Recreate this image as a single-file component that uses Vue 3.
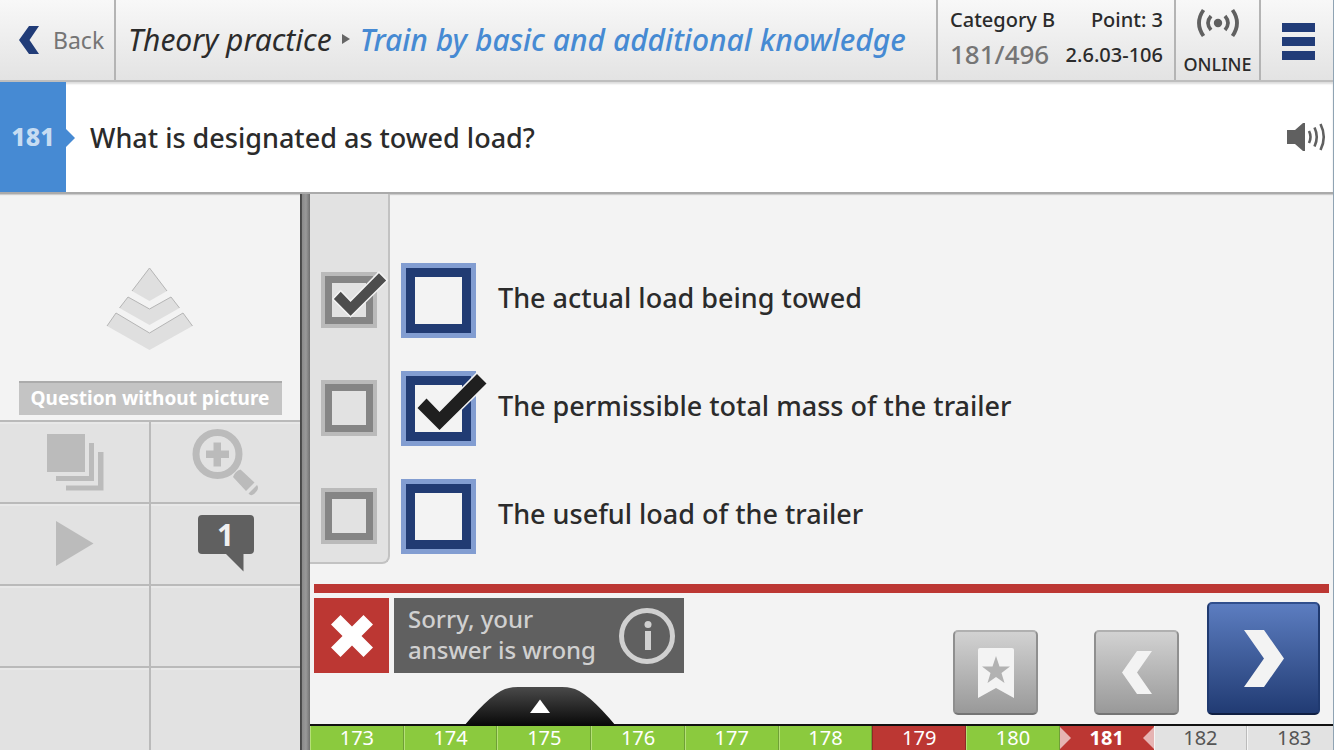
<template>
  <div class="trainer">
    <!-- Top bar -->
    <header class="topbar">
      <button class="back" type="button">
        <svg class="back-icon" viewBox="0 0 20 28" aria-hidden="true">
          <path d="M10 0H20L10.500 14L20 28H10L0 14Z" fill="#213c78" />
        </svg>
        Back
      </button>

      <nav class="crumbs">
        <a href="#">Theory practice</a>
        <svg class="crumb-arrow" viewBox="0 0 8 10" aria-hidden="true"><path d="M0 0L8 5L0 10Z" fill="#666" /></svg>
        <a href="#" class="current">Train by basic and additional knowledge</a>
      </nav>

      <div class="info">
        <div class="info-col">
          <span>Category B</span>
          <span class="counter">{{ current }}/{{ total }}</span>
        </div>
        <div class="info-col right">
          <span>Point: 3</span>
          <span>2.6.03-106</span>
        </div>
      </div>

      <div class="online">
        <svg class="online-icon" viewBox="0 0 42 28" fill="none" stroke="#606060" aria-hidden="true">
          <circle cx="21" cy="14" r="4.200" fill="#606060" stroke="none" />
          <path d="M14 7Q8 14 14 21M28 7Q34 14 28 21" stroke-width="3.600" />
          <path d="M6.500 1Q-2.500 14 6.500 27M35.500 1Q44.500 14 35.500 27" stroke-width="3.800" />
        </svg>
        <span>ONLINE</span>
      </div>

      <button class="menu" type="button" aria-label="Menu">
        <span></span><span></span><span></span>
      </button>
    </header>

    <!-- Question -->
    <section class="question">
      <div class="question-number">{{ current }}</div>
      <h1>What is designated as towed load?</h1>
      <button class="sound" type="button" aria-label="Read aloud">
        <svg viewBox="0 0 40 30" aria-hidden="true">
          <path d="M1 8H9L17 1H19V29H17L9 22H1Z" fill="#606060" />
          <path d="M23 9Q26 15 23 21M28.500 5.500Q33 15 28.500 24.500M34.500 2Q41 15 34.500 28" fill="none" stroke="#606060" stroke-width="2.600" />
        </svg>
      </button>
    </section>

    <main class="body">
      <aside class="side">
        <div class="picture">
          <svg class="pyramid" viewBox="0 0 88 84" aria-hidden="true">
            <g fill="#dfdfdf">
              <path d="M43.500 1L61 24L43.500 34L26 24Z" />
              <path d="M22 30L43.500 42L65 30L73.500 41L43.500 58L13.500 41Z" />
              <path d="M10 46L43.500 66L77 46L86.500 59L43.500 83L1 59Z" />
            </g>
            <g fill="none" stroke="#b5b5b5" stroke-width="1">
              <path d="M26 24L43.500 1L61 24" />
              <path d="M13.500 41L22 30L43.500 42L65 30L73.500 41" />
              <path d="M1 59L10 46L43.500 66L77 46L86.500 59" />
            </g>
          </svg>
          <div class="no-picture">Question without picture</div>
        </div>

        <div class="tools">
          <button type="button" aria-label="Pictures">
            <svg class="tool-icon" viewBox="0 0 66 66" fill="#bbb" aria-hidden="true">
              <path d="M5 5H43V43H5ZM47 14H52V52H14V47H47ZM56 23H61.500V61.500H24V56.500H56Z" />
            </svg>
          </button>
          <button type="button" aria-label="Zoom">
            <svg class="tool-icon" viewBox="0 0 66 66" fill="#bbb" aria-hidden="true">
              <circle cx="24.500" cy="25" r="21.500" fill="none" stroke="#bbb" stroke-width="7" />
              <path d="M20.500 13.500H28V21.500H36V29H28V37.500H20.500V29H13V21.500H20.500Z" />
              <path d="M47.500 40.500Q42 42 40 48L53 62L61.500 53.500ZM64 56L55.500 64.500Q58 67.500 61 65Q67 60 64 56Z" />
            </svg>
          </button>
          <button type="button" aria-label="Play">
            <svg class="tool-icon" viewBox="0 0 66 66" aria-hidden="true"><path d="M14 10L51.500 32.500L14 55Z" fill="#bbb" /></svg>
          </button>
          <button type="button" aria-label="Comments" class="comment">
            <svg class="tool-icon" viewBox="0 0 66 66" aria-hidden="true">
              <path d="M9 4H57Q61 4 61 8V39Q61 43 57 43H50.500V60.500L33 43H9Q5 43 5 39V8Q5 4 9 4Z" fill="#606060" />
            </svg>
            <span class="comment-count">1</span>
          </button>
          <div></div>
          <div></div>
          <div></div>
          <div></div>
        </div>
      </aside>

      <div class="divider"></div>

      <section class="content">
        <div class="answers">
          <div class="solutions">
            <span v-for="(a, i) in answers" :key="i" class="box small">
              <input type="checkbox" :checked="a.correct" disabled :aria-label="'Solution: ' + a.text">
              <svg v-if="a.correct" class="tick" viewBox="0 0 70 58" aria-hidden="true">
                <path d="M2.500 29L11.500 19.500L24.500 33L62 -5L71.500 4.500L24.500 51Z" fill="#4d4d4d" stroke="#f3f3f3" stroke-width="4" paint-order="stroke" />
              </svg>
            </span>
          </div>

          <div class="choices">
            <div v-for="(a, i) in answers" :key="i" class="choice">
              <span class="box">
                <input :id="'answer-' + i" v-model="a.picked" type="checkbox">
                <svg v-if="a.picked" class="tick" viewBox="0 0 70 58" aria-hidden="true">
                  <path d="M2.500 29L11.500 19.500L24.500 33L62 -5L71.500 4.500L24.500 51Z" fill="#1f1f1f" stroke="#f3f3f3" stroke-width="3" paint-order="stroke" />
                </svg>
              </span>
              <label :for="'answer-' + i">{{ a.text }}</label>
            </div>
          </div>
        </div>

        <div class="rule"></div>

        <div class="actions">
          <div class="wrong">
            <svg viewBox="0 0 42 42" aria-hidden="true">
              <path d="M9.500 0L21 11.500L32.500 0L42 9.500L30.500 21L42 32.500L32.500 42L21 30.500L9.500 42L0 32.500L11.500 21L0 9.500Z" fill="#fff" />
            </svg>
          </div>
          <button class="feedback" type="button">
            <span>Sorry, your<br>answer is wrong</span>
            <svg viewBox="0 0 58 58" aria-hidden="true">
              <circle cx="29" cy="29" r="25.500" fill="none" stroke="#d0d0d0" stroke-width="5" />
              <circle cx="30" cy="17.500" r="3.500" fill="#d0d0d0" />
              <path d="M27 24H33V43H27Z" fill="#d0d0d0" />
            </svg>
          </button>

          <div class="nav-buttons">
            <button class="key mark" type="button" aria-label="Bookmark">
              <svg viewBox="0 0 36 50" aria-hidden="true">
                <path d="M2 0H34Q36 0 36 2V50L18 40L0 50V2Q0 0 2 0Z" fill="#f3f3f3" />
                <path d="M18 8L21.500 18.500H32L23.500 25L26.500 35L18 29L9.500 35L12.500 25L4 18.500H14.500Z" fill="#b2b2b2" />
              </svg>
            </button>
            <button class="key prev" type="button" aria-label="Previous">
              <svg viewBox="0 0 30 43" aria-hidden="true"><path d="M15 0H30L15 21.500L30 43H15L0 21.500Z" fill="#f3f3f3" /></svg>
            </button>
            <button class="key next" type="button" aria-label="Next">
              <svg viewBox="0 0 40 57" aria-hidden="true"><path d="M0 0H20L40 28.500L20 57H0L20 28.500Z" fill="#f3f3f3" /></svg>
            </button>
          </div>
        </div>

        <footer class="strip">
          <button class="drawer" type="button" aria-label="Show all questions">
            <svg viewBox="0 0 152 39" aria-hidden="true">
              <defs>
                <linearGradient id="drawer-fill" x1="0" y1="0" x2="0" y2="1">
                  <stop offset="0" stop-color="#4a4a4a" />
                  <stop offset="1" stop-color="#080808" />
                </linearGradient>
              </defs>
              <path d="M0 39Q30 3 45 1Q48 0 54 0H98Q104 0 107 1Q122 3 152 39Z" fill="url(#drawer-fill)" />
              <path d="M76 12.500L86 26H66Z" fill="#fff" />
            </svg>
          </button>
          <div class="numbers">
            <button v-for="q in questions" :key="q.no" type="button" :class="[q.state, { active: q.no === current }]">
              {{ q.no }}
            </button>
          </div>
        </footer>
      </section>
    </main>
  </div>
</template>

<script setup>
import { ref } from 'vue'

const current = 181
const total = 496

const answers = ref([
  { text: 'The actual load being towed', correct: true, picked: false },
  { text: 'The permissible total mass of the trailer', correct: false, picked: true },
  { text: 'The useful load of the trailer', correct: false, picked: false }
])

const wrongOnes = [179, 181]

const questions = Array.from({ length: 11 }, (_, i) => {
  const no = 173 + i
  let state = 'right'
  if (wrongOnes.includes(no)) state = 'failed'
  else if (no > current) state = 'open'
  return { no, state }
})
</script>

<style>
body {
  margin: 0;
}
</style>

<style scoped>
.trainer {
  display: flex;
  flex-direction: column;
  box-sizing: border-box;
  min-height: 100vh;
  overflow: hidden;
  border-right: 1px solid #8fa3b3;
  background: #f3f3f3;
  color: #2b2b2b;
  font-family: "Noto Sans", "Open Sans", sans-serif;
  font-weight: 500;
}

button {
  padding: 0;
  border: 0;
  background: none;
  color: inherit;
  font: inherit;
  cursor: pointer;
}

svg {
  display: block;
  overflow: visible;
}

/* Top bar */
.topbar {
  display: flex;
  box-sizing: border-box;
  height: 82px;
  border-bottom: 2px solid #bebebe;
  background: linear-gradient(#f8f8f8, #e3e3e3);
}

.topbar > * {
  box-sizing: border-box;
  border-right: 2px solid #b4b4b4;
}

.back {
  display: flex;
  align-items: center;
  gap: 14px;
  width: 116px;
  padding-left: 19px;
  color: #757575;
  font-size: 23px;
  font-weight: 400;
}

.back-icon {
  width: 20px;
  height: 28px;
}

.crumbs {
  display: flex;
  flex: 1;
  align-items: center;
  gap: 10px;
  min-width: 0;
  padding: 0 0 2px 12px;
  font-size: 30px;
  font-style: italic;
  font-weight: 400;
  white-space: nowrap;
}

.crumbs a {
  color: #2b2b2b;
  text-decoration: none;
}

.crumbs .current {
  color: #468ad3;
  font-weight: 500;
}

.crumb-arrow {
  width: 8px;
  height: 10px;
}

.info {
  display: flex;
  justify-content: space-between;
  width: 238px;
  padding: 4px 11px 0 12px;
  font-size: 20px;
  line-height: 32px;
}

.info-col {
  display: flex;
  flex-direction: column;
  gap: 3px;
}

.info-col.right {
  text-align: right;
}

.counter {
  color: #757575;
  font-size: 26px;
  line-height: 30px;
}

.online {
  display: flex;
  flex-direction: column;
  align-items: center;
  justify-content: space-between;
  width: 85px;
  padding: 9px 0 4px;
  font-size: 18px;
  line-height: 24px;
}

.online-icon {
  width: 42px;
  height: 28px;
}

.topbar .menu {
  display: flex;
  flex-direction: column;
  align-items: center;
  justify-content: center;
  gap: 5px;
  width: 72px;
  padding: 2px 0 0 2px;
  border-right: 0;
}

.menu span {
  width: 33px;
  height: 9px;
  background: #213c78;
}

/* Question */
.question {
  display: flex;
  align-items: center;
  box-sizing: border-box;
  height: 112px;
  border-bottom: 2px solid #aaa;
  background: #fff;
  box-shadow: inset 0 2px 2px #ddd, 0 1px 1px #ccc;
}

.question-number {
  position: relative;
  width: 66px;
  height: 110px;
  background: #468ad3;
  color: #c6dcf2;
  font-size: 25px;
  font-weight: 800;
  line-height: 108px;
  text-align: center;
}

.question-number::after {
  content: "";
  position: absolute;
  top: 47px;
  left: 66px;
  border: 9px solid transparent;
  border-right-width: 0;
  border-left-color: #468ad3;
}

h1 {
  flex: 1;
  margin: 0 0 0 24px;
  font-size: 27px;
  font-weight: 500;
}

.sound {
  width: 40px;
  margin-right: 7px;
}

.sound svg {
  width: 40px;
  height: 30px;
}

/* Left column */
.body {
  display: flex;
  flex: 1;
}

.side {
  display: flex;
  flex-direction: column;
  width: 300px;
}

.picture {
  display: flex;
  flex-direction: column;
  align-items: center;
  justify-content: flex-end;
  gap: 30px;
  height: 221px;
  padding-bottom: 5px;
}

.pyramid {
  width: 88px;
  height: 84px;
}

.no-picture {
  box-sizing: border-box;
  width: 263px;
  height: 34px;
  border-top: 2px solid #ababab;
  background: #c4c4c4;
  color: #fff;
  font-size: 19px;
  font-weight: 700;
  line-height: 30px;
  text-align: center;
}

.tools {
  display: grid;
  flex: 1;
  grid-template-columns: 151px 1fr;
  grid-template-rows: 82px 82px 82px 1fr;
  background: #e2e2e2;
}

.tools > * {
  position: relative;
  display: flex;
  align-items: center;
  justify-content: center;
  border-top: 2px solid #bababa;
  box-shadow: inset 0 2px #e8e8e8;
}

.tools > :nth-child(odd) {
  border-right: 2px solid #bababa;
}

.tool-icon {
  width: 66px;
  height: 66px;
}

.comment-count {
  position: absolute;
  inset: 6px 0 auto;
  color: #f0f0f0;
  font-size: 30px;
  font-weight: 700;
  line-height: 50px;
}

.divider {
  width: 10px;
  background: linear-gradient(90deg, #454545, #505050 18%, #8c8c8c 24%, #999 60%, #707070);
}

/* Answers */
.content {
  display: flex;
  flex: 1;
  flex-direction: column;
  min-width: 0;
}

.answers {
  display: flex;
  align-items: flex-start;
}

.solutions {
  display: flex;
  flex-direction: column;
  gap: 52px;
  padding: 78px 11px 18px;
  border-right: 2px solid #c2c2c2;
  border-bottom: 2px solid #c2c2c2;
  border-radius: 0 0 8px;
  background: #e2e2e2;
}

.choices {
  display: flex;
  flex-direction: column;
  gap: 33px;
  padding: 69px 0 0 11px;
}

.choice {
  display: flex;
  align-items: center;
  gap: 22px;
  font-size: 27px;
}

.choice label {
  padding-bottom: 6px;
}

.box {
  position: relative;
  display: block;
  width: 75px;
  height: 75px;
}

.box input {
  display: block;
  box-sizing: border-box;
  width: 100%;
  height: 100%;
  margin: 0;
  border: 5px solid #829dd1;
  background: #f3f3f3;
  box-shadow: inset 0 0 0 9px #213b73;
  appearance: none;
}

.box.small {
  width: 56px;
  height: 56px;
}

.box.small input {
  border: 4px solid #bababa;
  background: #e2e2e2;
  box-shadow: inset 0 0 0 7px #858585;
}

.tick {
  position: absolute;
  top: 8px;
  left: 14px;
  width: 70px;
  height: 58px;
  pointer-events: none;
}

.small .tick {
  top: 5px;
  left: 11px;
  width: 53px;
  height: 44px;
}

/* Feedback and navigation */
.rule {
  height: 9px;
  margin: 20px 4px 0;
  background: #bc3733;
}

.actions {
  display: flex;
  align-items: flex-start;
  gap: 5px;
  padding: 5px 13px 9px 4px;
}

.wrong {
  display: flex;
  align-items: center;
  justify-content: center;
  width: 75px;
  height: 75px;
  background: #bc3733;
}

.wrong svg {
  width: 42px;
  height: 42px;
}

.feedback {
  display: flex;
  align-items: center;
  justify-content: space-between;
  width: 290px;
  height: 75px;
  padding: 0 8px 0 14px;
  background: #606060;
  color: #d0d0d0;
  font-size: 24px;
  line-height: 31px;
  text-align: left;
}

.feedback span {
  padding-bottom: 4px;
}

.feedback svg {
  width: 58px;
  height: 58px;
}

.nav-buttons {
  display: flex;
  align-items: flex-end;
  margin: 4px 0 0 auto;
}

.key {
  display: flex;
  align-items: center;
  justify-content: center;
  box-sizing: border-box;
  width: 85px;
  height: 85px;
  border: 2px solid;
  border-color: #b0b0b0 #8f8f8f #757575;
  border-radius: 5px;
  background: linear-gradient(#d2d2d2, #999);
}

.mark svg {
  width: 36px;
  height: 50px;
}

.prev {
  margin: 0 28px 0 56px;
}

.prev svg {
  width: 30px;
  height: 43px;
}

.next {
  width: 113px;
  height: 113px;
  border-color: #304f8d #203a70 #101f42;
  background: linear-gradient(#5c7dc0, #213b73);
}

.next svg {
  width: 40px;
  height: 57px;
}

/* Question strip */
.strip {
  position: relative;
  margin-top: auto;
  overflow-x: clip;
  border-top: 2px solid #111;
}

.drawer {
  position: absolute;
  bottom: 100%;
  left: 154px;
}

.drawer svg {
  width: 152px;
  height: 39px;
}

.numbers {
  display: grid;
  grid-template-columns: repeat(11, 1fr);
  margin-right: -8px;
}

.numbers button {
  position: relative;
  height: 24px;
  border-right: 1px solid #6f9f36;
  border-left: 1px solid #b5e077;
  color: #fff;
  font-size: 20px;
  font-weight: 400;
  line-height: 24px;
}

.numbers .right {
  background: #8bca3e;
}

.numbers .failed {
  border-color: #bc3733 #8e2a27;
  background: #bc3733;
}

.numbers .open {
  border-color: #bbb #f5f5f5;
  border-right-color: #bbb;
  background: #e2e2e2;
  color: #555;
}

.numbers .active {
  border-color: #bc3733;
  font-weight: 700;
}

.active::before,
.active::after {
  content: "";
  position: absolute;
  top: 1px;
  border: 11px solid transparent;
}

.active::before {
  left: -1px;
  border-right-width: 0;
  border-left-color: #e6b4b3;
}

.active::after {
  right: -1px;
  border-left-width: 0;
  border-right-color: #e6b4b3;
}
</style>
